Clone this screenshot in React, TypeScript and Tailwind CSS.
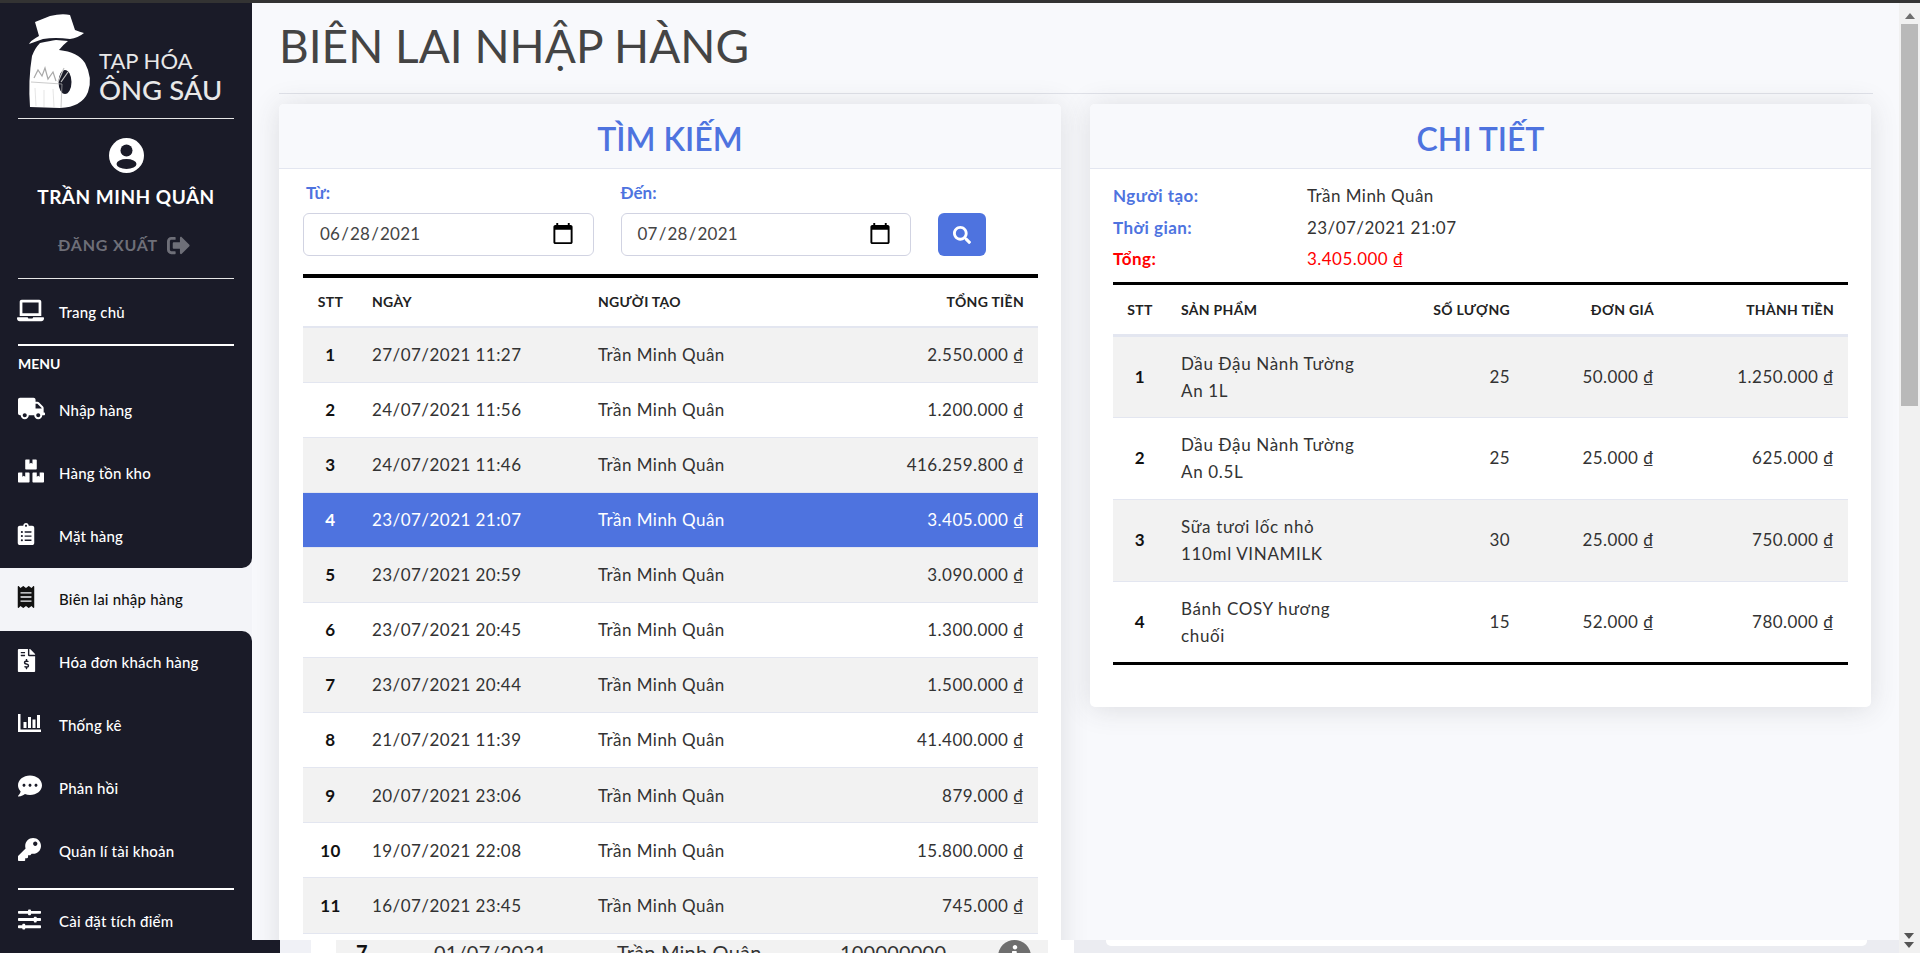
import type { ReactNode } from 'react';
import {
  FaLaptop,
  FaTruck,
  FaBoxes,
  FaClipboardList,
  FaReceipt,
  FaFileInvoiceDollar,
  FaCommentDots,
  FaKey,
  FaSlidersH,
  FaSignOutAlt,
  FaSearch,
  FaInfo,
} from 'react-icons/fa';

const receipts = [
  ['27/07/2021 11:27', '2.550.000'],
  ['24/07/2021 11:56', '1.200.000'],
  ['24/07/2021 11:46', '416.259.800'],
  ['23/07/2021 21:07', '3.405.000'],
  ['23/07/2021 20:59', '3.090.000'],
  ['23/07/2021 20:45', '1.300.000'],
  ['23/07/2021 20:44', '1.500.000'],
  ['21/07/2021 11:39', '41.400.000'],
  ['20/07/2021 23:06', '879.000'],
  ['19/07/2021 22:08', '15.800.000'],
  ['16/07/2021 23:45', '745.000'],
];

const details = [
  [['Dầu Đậu Nành Tường', 'An 1L'], '25', '50.000', '1.250.000'],
  [['Dầu Đậu Nành Tường', 'An 0.5L'], '25', '25.000', '625.000'],
  [['Sữa tươi lốc nhỏ', '110ml VINAMILK'], '30', '25.000', '750.000'],
  [['Bánh COSY hương', 'chuối'], '15', '52.000', '780.000'],
] as const;

function Logo() {
  return (
    <svg viewBox="0 0 100 105" className="w-[100px] h-[105px] shrink-0">
      {/* hat */}
      <path
        d="M15 12 L30 6 Q42 3 50 5 L55 20 Q60 22 64 23 Q58 28 50 29 Q35 27 23 29 L9 34 Q10 31 19 26 Z"
        fill="#fff"
      />
      {/* the 6 */}
      <path
        d="M20 33 Q30 31 36 30 L48 31 Q44 34 39 40 Q58 42 65 53 Q73 68 68 82 Q62 97 40 98 L10 97 Q8 70 12 46 Q15 38 20 33 Z"
        fill="#fff"
      />
      <ellipse cx="45" cy="72" rx="6.5" ry="12" fill="#1a1b28" />
      {/* shopping bag */}
      <path d="M11 72 L42 74 L41 98" fill="none" stroke="#b5b5b5" strokeWidth="0.7" />
      <path d="M15 78 L16 96 M24 80 L24 97 M33 79 L34 97" stroke="#dedede" strokeWidth="0.8" />
      <path d="M14 68 L18 60 L22 66 L25 58 L28 69 L33 62 L36 71" fill="none" stroke="#a8a8a8" strokeWidth="1.2" />
      <path d="M38 72 L44 58 M41 72 L48 62" stroke="#c4c4c4" strokeWidth="1.2" />
    </svg>
  );
}

function UserIcon() {
  return (
    <svg viewBox="0 0 35 35" className="w-[35px] h-[35px]">
      <circle cx="17.5" cy="17.5" r="17.5" fill="#fff" />
      <circle cx="17.5" cy="12.5" r="6" fill="#1a1b28" />
      <ellipse cx="17.5" cy="26" rx="10" ry="5" fill="#1a1b28" />
    </svg>
  );
}

function BarsIcon() {
  return (
    <svg viewBox="0 0 23 18" className="w-[23px] h-[18px]" fill="#fff">
      <rect x="0" y="0" width="2.5" height="18" />
      <rect x="0" y="15.5" width="23" height="2.5" />
      <rect x="5.5" y="8" width="3" height="6" />
      <rect x="10" y="3" width="3" height="11" />
      <rect x="14.5" y="5.5" width="3" height="8.5" />
      <rect x="19" y="1" width="3" height="13" />
    </svg>
  );
}

function NavItem({ icon, label, active }: { icon: ReactNode; label: string; active?: boolean }) {
  return (
    <div className={`h-[63px] flex items-center pl-[18px] text-[15px] font-medium tracking-[0.2px] ${active ? 'text-[#111]' : 'text-white'}`}>
      <span className="w-[41px] -mt-[5px] shrink-0 flex items-center">{icon}</span>
      <span>{label}</span>
    </div>
  );
}

function DateField({ label, value, labelClass }: { label: string; value: string; labelClass: string }) {
  return (
    <label className="flex-1 block">
      <span className={`block h-[32px] text-[#4e73df] font-bold text-[17px] leading-[24px] ${labelClass}`}>{label}</span>
      <input
        type="date"
        defaultValue={value}
        className="w-full h-[43px] pb-[2px] border border-[#d1d3e2] rounded-[6px] pl-[15px] pr-[16px] text-[17px] tracking-[0.2px] text-[#444] bg-white [&::-webkit-calendar-picker-indicator]:w-[24px] [&::-webkit-calendar-picker-indicator]:h-[24px]"
      />
    </label>
  );
}

function Sidebar() {
  return (
    <aside className="w-[252px] shrink-0 bg-[#f3f4f8] flex flex-col overflow-hidden">
      <div className="shrink-0 bg-[#1a1b28] rounded-br-[10px] h-[565px] text-white">
        <div className="flex items-start pl-[20px] pt-[7px] h-[115px]">
          <Logo />
          <div className="-ml-[21px] pt-[37px] text-[#e8e8e8]">
            <div className="text-[22px] leading-[27px] whitespace-nowrap">TẠP HÓA</div>
            <div className="text-[27.5px] leading-[32px] font-medium whitespace-nowrap">ÔNG SÁU</div>
          </div>
        </div>
        <div className="mx-[18px] h-px bg-[#e6e6e6]" />
        <div className="flex justify-center pt-[19px]">
          <UserIcon />
        </div>
        <div className="text-center text-[19px] font-bold tracking-[0.5px] leading-[24px] mt-[12px]">TRẦN MINH QUÂN</div>
        <div className="flex items-center justify-center gap-[9px] mt-[24px] pr-[4px] text-[#6e6f78] text-[16px] font-bold tracking-[0.8px] leading-[24px]">
          ĐĂNG XUẤT <FaSignOutAlt size={23} />
        </div>
        <div className="mx-[18px] h-px bg-[#e6e6e6] mt-[21px]" />
        <div className="h-[65px] flex items-center pl-[18px] pt-[2px] text-[15px] font-medium tracking-[0.2px]">
          <span className="w-[41px] -mt-[4px] shrink-0"><FaLaptop size={27} className="-ml-px" /></span>
          <span>Trang chủ</span>
        </div>
        <div className="mx-[18px] h-[2px] bg-white" />
        <div className="px-[18px] pt-[9px] text-[14px] font-bold leading-[18px]">MENU</div>
        <div className="mt-[6px]">
          <NavItem icon={<FaTruck size={27} />} label="Nhập hàng" />
          <NavItem icon={<FaBoxes size={26} />} label="Hàng tồn kho" />
          <NavItem icon={<FaClipboardList size={22} className="-ml-[3px]" />} label="Mặt hàng" />
        </div>
      </div>
      <div className="shrink-0">
        <NavItem active icon={<FaReceipt size={22} color="#111" className="-ml-[3px]" />} label="Biên lai nhập hàng" />
      </div>
      <div className="flex-1 bg-[#1a1b28] rounded-tr-[10px]">
        <NavItem icon={<FaFileInvoiceDollar size={23} color="#fff" className="-ml-[3px]" />} label="Hóa đơn khách hàng" />
        <NavItem icon={<BarsIcon />} label="Thống kê" />
        <NavItem icon={<FaCommentDots size={24} color="#fff" />} label="Phản hồi" />
        <NavItem icon={<FaKey size={23} color="#fff" />} label="Quản lí tài khoản" />
        <div className="mx-[18px] mt-[5px] h-[2px] bg-white" />
        <NavItem icon={<FaSlidersH size={23} color="#fff" />} label="Cài đặt tích điểm" />
      </div>
    </aside>
  );
}

function Money({ value }: { value: string }) {
  return <>{value} ₫</>;
}

function CardHeader({ title }: { title: string }) {
  return (
    <div className="h-[65px] pt-[6px] bg-[#f8f9fc] border-b border-[#e3e6f0] rounded-t-[5px] flex items-center justify-center text-[#4e73df] text-[32px] font-semibold">
      {title}
    </div>
  );
}

function SearchCard() {
  return (
    <section className="w-[782px] h-[900px] shrink-0 bg-white rounded-[5px] shadow-[0_2px_28px_rgba(58,59,69,0.15)]">
      <CardHeader title="TÌM KIẾM" />
      <div className="px-[24px] pt-[12px]">
        <div className="flex items-end w-[683px] gap-[27px]">
          <DateField label="Từ:" value="2021-06-28" labelClass="pl-[3px]" />
          <DateField label="Đến:" value="2021-07-28" labelClass="" />
          <button className="w-[48px] h-[43px] shrink-0 bg-[#4e73df] rounded-[6px] flex items-center justify-center text-white">
            <FaSearch size={18} />
          </button>
        </div>
        <table className="w-[735px] mt-[18px] table-fixed border-collapse border-t-[4px] border-black text-[17px] tracking-[0.45px] text-[#333]">
          <colgroup>
            <col className="w-[55px]" />
            <col className="w-[226px]" />
            <col className="w-[214px]" />
            <col />
          </colgroup>
          <thead>
            <tr className="h-[51px] border-b-2 border-[#e3e6f0] text-[14px] tracking-[0.3px] font-bold text-[#222]">
              <th className="text-center font-bold pb-[2px]">STT</th>
              <th className="text-left font-bold pl-[14px] pb-[2px]">NGÀY</th>
              <th className="text-left font-bold pl-[14px] pb-[2px]">NGƯỜI TẠO</th>
              <th className="text-right font-bold pr-[14px] pb-[2px]">TỔNG TIỀN</th>
            </tr>
          </thead>
          <tbody>
            {receipts.map(([date, total], i) => {
              const selected = i === 3;
              return (
                <tr
                  key={date}
                  className={`h-[55.1px] border-b border-[#e3e6f0] ${selected ? 'bg-[#4e73df] text-white' : i % 2 === 0 ? 'bg-[#f2f2f2]' : 'bg-white'}`}
                >
                  <td className={`text-center font-bold ${selected ? '' : 'text-[#111]'}`}>{i + 1}</td>
                  <td className="pl-[14px]">{date}</td>
                  <td className="pl-[14px]">Trần Minh Quân</td>
                  <td className="text-right pr-[14px]"><Money value={total} /></td>
                </tr>
              );
            })}
          </tbody>
        </table>
      </div>
    </section>
  );
}

function DetailCard() {
  return (
    <section className="w-[781px] h-[603px] shrink-0 bg-white rounded-[5px] shadow-[0_2px_28px_rgba(58,59,69,0.15)]">
      <CardHeader title="CHI TIẾT" />
      <div className="px-[23px] pt-[11px] text-[17px] tracking-[0.45px] text-[#333]">
        <dl className="grid grid-cols-[194px_1fr] auto-rows-[31.5px] items-center">
          <dt className="font-bold text-[#4e73df]">Người tạo:</dt>
          <dd>Trần Minh Quân</dd>
          <dt className="font-bold text-[#4e73df]">Thời gian:</dt>
          <dd>23/07/2021 21:07</dd>
          <dt className="font-bold text-[#ff0000]">Tổng:</dt>
          <dd className="text-[#ff0000]"><Money value="3.405.000" /></dd>
        </dl>
        <table className="w-[735px] mt-[7px] table-fixed border-collapse border-y-[3px] border-black">
          <colgroup>
            <col className="w-[54px]" />
            <col className="w-[215px]" />
            <col className="w-[142px]" />
            <col className="w-[144px]" />
            <col />
          </colgroup>
          <thead>
            <tr className="h-[52px] border-b-[3px] border-[#e3e6f0] text-[14px] tracking-[0.3px] text-[#222]">
              <th className="text-center font-bold">STT</th>
              <th className="text-left font-bold pl-[14px]">SẢN PHẨM</th>
              <th className="text-right font-bold pr-[14px]">SỐ LƯỢNG</th>
              <th className="text-right font-bold pr-[14px]">ĐƠN GIÁ</th>
              <th className="text-right font-bold pr-[14px]">THÀNH TIỀN</th>
            </tr>
          </thead>
          <tbody>
            {details.map(([name, quantity, price, total], i) => (
              <tr key={name.join()} className={`h-[82px] border-b border-[#e3e6f0] last:border-b-0 ${i % 2 === 0 ? 'bg-[#f2f2f2]' : 'bg-white'}`}>
                <td className="text-center font-bold text-[#111]">{i + 1}</td>
                <td className="pl-[14px] leading-[27px] tracking-[0.65px]">
                  {name[0]}
                  <br />
                  {name[1]}
                </td>
                <td className="text-right pr-[14px]">{quantity}</td>
                <td className="text-right pr-[14px]"><Money value={price} /></td>
                <td className="text-right pr-[14px]"><Money value={total} /></td>
              </tr>
            ))}
          </tbody>
        </table>
      </div>
    </section>
  );
}

// strip under the page: the previous view still showing below the content
function BottomStrip() {
  return (
    <div className="h-[13px] flex overflow-hidden bg-[#ebecf1]">
      <div className="w-[280px] shrink-0 bg-[#1a1b28]" />
      <div className="w-[31px] shrink-0 bg-[#f0f1f6]" />
      <div className="w-[763px] shrink-0 bg-white pl-[25px] h-full">
        <div className="w-[712px] h-[40px] bg-[#f2f2f2] flex text-[20px] tracking-[0.2px] leading-[24px] text-[#333]">
          <span className="ml-[20px] w-[78px] font-bold text-[#111]">7</span>
          <span className="w-[183px]">01/07/2021</span>
          <span className="w-[223px]">Trần Minh Quân</span>
          <span className="w-[158px]">100000000</span>
          <span className="w-[33px] h-[33px] rounded-full bg-[#6e6e6e] text-white flex items-center justify-center">
            <FaInfo size={16} className="-mt-[8px]" />
          </span>
        </div>
      </div>
      <div className="w-[32px] shrink-0" />
      <div className="w-[761px] shrink-0 h-[6px] bg-white rounded-b-[5px]" />
    </div>
  );
}

function Scrollbar() {
  return (
    <div className="w-[21px] shrink-0 bg-[#f1f1f1] flex flex-col items-center relative">
      <span className="mt-[10px] w-0 h-0 border-x-[5px] border-x-transparent border-b-[6px] border-b-[#6e6e6e]" />
      <span className="mt-[5px] w-[17px] h-[382px] bg-[#b9b9b9]" />
      <span className="absolute left-[5px] top-[930px] w-0 h-0 border-x-[5px] border-x-transparent border-t-[6px] border-t-[#555]" />
      <span className="absolute left-[5px] top-[939px] w-0 h-0 border-x-[5px] border-x-transparent border-t-[6px] border-t-[#555]" />
    </div>
  );
}

export default function App() {
  return (
    <div className="w-full h-[953px] overflow-hidden flex flex-col font-['Lato','Noto_Sans',sans-serif] bg-[#f8f9fc]">
      <div className="h-[3px] shrink-0 bg-[#333]" />
      <div className="flex-1 flex min-h-0">
        <div className="flex-1 min-w-0 flex flex-col">
          <div className="h-[937px] flex">
            <Sidebar />
            <main className="flex-1 min-w-0 overflow-hidden pl-[27px]">
              <h1 className="h-[90px] pt-[17px] text-[46px] leading-[52px] text-[#444] whitespace-nowrap">BIÊN LAI NHẬP HÀNG</h1>
              <hr className="w-[1594px] border-t border-[#dfe1e8]" />
              <div className="flex gap-[29px] mt-[10px]">
                <SearchCard />
                <DetailCard />
              </div>
            </main>
          </div>
          <BottomStrip />
        </div>
        <Scrollbar />
      </div>
    </div>
  );
}
